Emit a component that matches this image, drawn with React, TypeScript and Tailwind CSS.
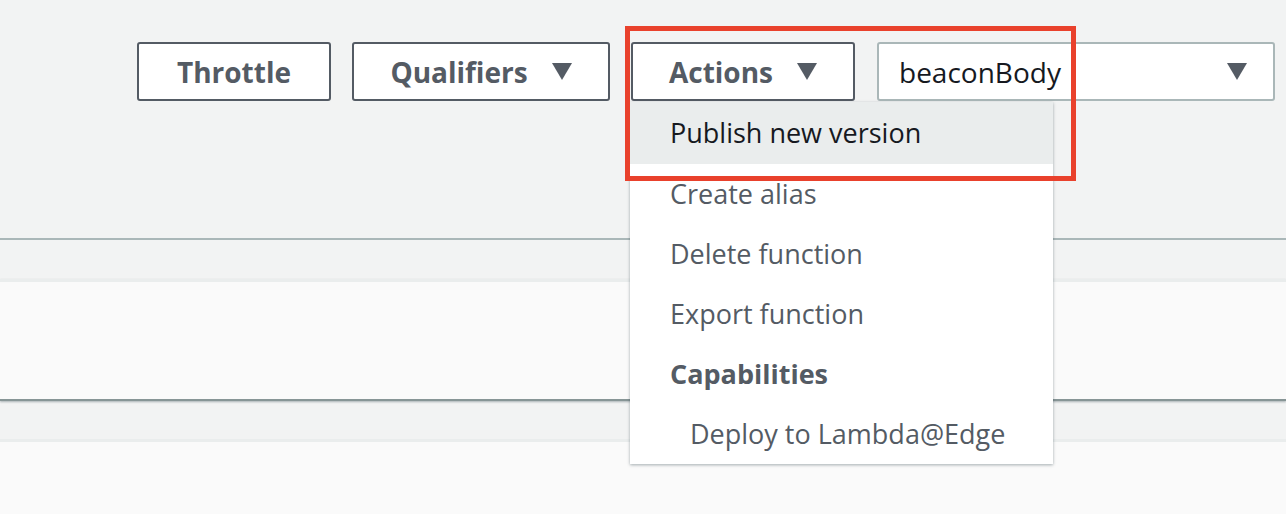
const font = "font-['Open_Sans',_'Liberation_Sans',_sans-serif]";

function Caret() {
  return (
    <svg width="20" height="17" viewBox="0 0 20 17" className="shrink-0">
      <path d="M0 0 H20 L10 17 Z" fill="#545b64" />
    </svg>
  );
}

const menuItems = [
  { label: 'Create alias' },
  { label: 'Delete function' },
  { label: 'Export function' },
];

export default function App() {
  return (
    <div className={`${font} relative w-[1286px] h-[514px] overflow-hidden bg-[#f2f3f3]`}>
      {/* Toolbar */}
      <div className="h-[240px] border-b-2 border-[#aab7b8] pt-[42px] pr-[11px]">
        <div className="flex justify-end">
          <button className="w-[194px] h-[59px] rounded-[3px] border-2 border-[#545b64] bg-white text-[28px] font-bold text-[#545b64]">
            Throttle
          </button>
          <button className="ml-[21px] w-[258px] h-[59px] rounded-[3px] border-2 border-[#545b64] bg-white text-[28px] font-bold text-[#545b64] flex items-center justify-center gap-[24px]">
            Qualifiers
            <Caret />
          </button>
          <div className="relative ml-[21px]">
            <button className="w-[224px] h-[59px] rounded-[3px] border-2 border-[#545b64] bg-white text-[28px] font-bold text-[#545b64] flex items-center justify-center gap-[24px]">
              Actions
              <Caret />
            </button>
            {/* Dropdown menu */}
            <div className="absolute left-[-1px] top-[60px] z-10 w-[423px] bg-white shadow-[0_1px_3px_rgba(0,28,36,0.35)] text-[27px] text-[#545b64]">
              <div className="h-[62px] pt-[1px] flex items-center pl-[40px] bg-[#eaeded] text-[#16191f]">
                Publish new version
              </div>
              {menuItems.map((item) => (
                <div key={item.label} className="h-[60px] flex items-center pl-[40px]">
                  {item.label}
                </div>
              ))}
              <div className="h-[60px] flex items-center pl-[40px] font-bold">Capabilities</div>
              <div className="h-[60px] flex items-center pl-[60px]">Deploy to Lambda@Edge</div>
            </div>
          </div>
          <div className="ml-[22px] w-[398px] h-[59px] rounded-[3px] border-2 border-[#aab7b8] bg-white flex items-center justify-between pl-[20px] pr-[26px]">
            <span className="text-[28px] text-[#16191f]">beaconBody</span>
            <Caret />
          </div>
        </div>
      </div>

      {/* Panels below */}
      <div className="h-[39px]" />
      <div className="h-[122px] border-t-[3px] border-[#eaeded] border-b-2 border-b-[#879596] bg-[#fafafa] shadow-[0_1px_2px_rgba(0,28,36,0.3)]" />
      <div className="h-[38px]" />
      <div className="h-[80px] border-t-[3px] border-[#eaeded] bg-[#fafafa]" />

      {/* Highlight box */}
      <div className="absolute left-[625px] top-[26px] w-[451px] h-[155px] border-[5px] border-[#e9412c] z-20" />
    </div>
  );
}
